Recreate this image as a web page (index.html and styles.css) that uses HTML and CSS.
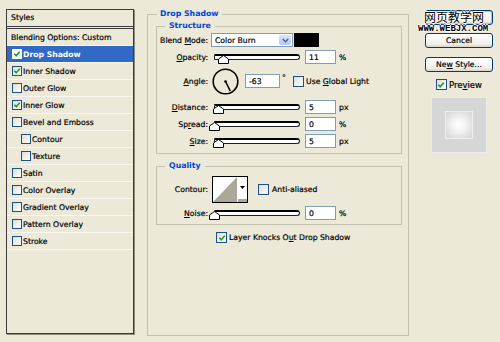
FILE: index.html
```html
<!DOCTYPE html>
<html lang="en">
<head>
  <meta charset="UTF-8">
  <meta name="viewport" content="width=device-width, initial-scale=1.0">
  <title>Layer Style</title>
  <link rel="stylesheet" href="styles.css">
</head>
<body>
  <div class="dialog">
    <div class="styles-list">
      <div class="list-head">Styles</div>
      <div class="list-row">Blending Options: Custom</div>
      <div class="list-row selected"><span class="cb checked"><svg viewBox="0 0 9 9"><path d="M1.5 4.2 L3.6 6.5 L7.6 2"/></svg></span>Drop Shadow</div>
      <div class="list-row"><span class="cb checked"><svg viewBox="0 0 9 9"><path d="M1.5 4.2 L3.6 6.5 L7.6 2"/></svg></span>Inner Shadow</div>
      <div class="list-row"><span class="cb"></span>Outer Glow</div>
      <div class="list-row"><span class="cb checked"><svg viewBox="0 0 9 9"><path d="M1.5 4.2 L3.6 6.5 L7.6 2"/></svg></span>Inner Glow</div>
      <div class="list-row"><span class="cb"></span>Bevel and Emboss</div>
      <div class="list-row sub"><span class="cb"></span>Contour</div>
      <div class="list-row sub"><span class="cb"></span>Texture</div>
      <div class="list-row"><span class="cb"></span>Satin</div>
      <div class="list-row"><span class="cb"></span>Color Overlay</div>
      <div class="list-row"><span class="cb"></span>Gradient Overlay</div>
      <div class="list-row"><span class="cb"></span>Pattern Overlay</div>
      <div class="list-row"><span class="cb"></span>Stroke</div>
    </div>

    <fieldset class="group outer">
      <legend>Drop Shadow</legend>

      <fieldset class="group">
        <legend>Structure</legend>
        <div class="rows">
          <div class="row">
            <span class="lbl">Blend <u>M</u>ode:</span>
            <div class="select">Color Burn<span class="select-btn"><svg viewBox="0 0 9 6"><path d="M1 1 L4.5 4.5 L8 1"/></svg></span></div>
            <div class="swatch"></div>
          </div>
          <div class="row">
            <span class="lbl"><u>O</u>pacity:</span>
            <div class="slider"><div class="track"></div><svg class="thumb" style="left: 11%" viewBox="0 0 11 9"><polygon points="0.5,8.5 0.5,4 5.5,0.5 10.5,4 10.5,8.5"/></svg></div>
            <input class="num" type="text" value="11">
            <span class="unit">%</span>
          </div>
          <div class="row row-angle">
            <span class="lbl"><u>A</u>ngle:</span>
            <svg class="dial" viewBox="0 0 27 27"><circle cx="13.5" cy="13.5" r="12.3"/><line x1="13.5" y1="13.5" x2="18.3" y2="23"/><circle class="dot" cx="13.5" cy="13.5" r="1.3"/></svg>
            <input class="num num-angle" type="text" value="-63">
            <span class="deg">°</span>
            <span class="cb global"></span>
            <span class="cb-text">Use <u>G</u>lobal Light</span>
          </div>
          <div class="row">
            <span class="lbl"><u>D</u>istance:</span>
            <div class="slider"><div class="track"></div><svg class="thumb" style="left: 5%" viewBox="0 0 11 9"><polygon points="0.5,8.5 0.5,4 5.5,0.5 10.5,4 10.5,8.5"/></svg></div>
            <input class="num" type="text" value="5">
            <span class="unit">px</span>
          </div>
          <div class="row">
            <span class="lbl">Sp<u>r</u>ead:</span>
            <div class="slider"><div class="track"></div><svg class="thumb" style="left: 0%" viewBox="0 0 11 9"><polygon points="0.5,8.5 0.5,4 5.5,0.5 10.5,4 10.5,8.5"/></svg></div>
            <input class="num" type="text" value="0">
            <span class="unit">%</span>
          </div>
          <div class="row">
            <span class="lbl"><u>S</u>ize:</span>
            <div class="slider"><div class="track"></div><svg class="thumb" style="left: 5%" viewBox="0 0 11 9"><polygon points="0.5,8.5 0.5,4 5.5,0.5 10.5,4 10.5,8.5"/></svg></div>
            <input class="num" type="text" value="5">
            <span class="unit">px</span>
          </div>
        </div>
      </fieldset>

      <fieldset class="group quality">
        <legend>Quality</legend>
        <div class="rows">
          <div class="row row-contour">
            <span class="lbl">Contour:</span>
            <svg class="contour" viewBox="0 0 36 27">
              <rect x="0.5" y="0.5" width="35" height="26" fill="#fff" stroke="#000"/>
              <polygon points="1,26 25,1 25,26" fill="#aca899"/>
              <polygon points="28,10 33,10 30.5,13" fill="#000"/>
              <rect x="26" y="23" width="9" height="3" fill="#aca899"/>
            </svg>
            <span class="cb anti"></span>
            <span class="cb-text">Anti-aliased</span>
          </div>
          <div class="row">
            <span class="lbl"><u>N</u>oise:</span>
            <div class="slider"><div class="track"></div><svg class="thumb" style="left: 0%" viewBox="0 0 11 9"><polygon points="0.5,8.5 0.5,4 5.5,0.5 10.5,4 10.5,8.5"/></svg></div>
            <input class="num" type="text" value="0">
            <span class="unit">%</span>
          </div>
        </div>
      </fieldset>

      <div class="knock">
        <span class="cb checked"><svg viewBox="0 0 9 9"><path d="M1.5 4.2 L3.6 6.5 L7.6 2"/></svg></span>
        <span class="cb-text">Layer Knocks O<u>u</u>t Drop Shadow</span>
      </div>
    </fieldset>

    <div class="side">
      <button class="btn default" aria-label="OK"></button>
      <button class="btn cancel">Cancel</button>
      <button class="btn new-style">Ne<u>w</u> Style...</button>
      <div class="preview-check">
        <span class="cb checked"><svg viewBox="0 0 9 9"><path d="M1.5 4.2 L3.6 6.5 L7.6 2"/></svg></span>
        <span class="cb-text">Pre<u>v</u>iew</span>
      </div>
      <div class="preview">
        <div class="preview-swatch"></div>
      </div>

      <div class="watermark">
        <div class="wm-cn">网页教学网</div>
        <div class="wm-url">WWW.WEBJX.COM</div>
      </div>
    </div>
  </div>
</body>
</html>
```

FILE: styles.css
```css
* {
  box-sizing: border-box;
}

body {
  margin: 0;
  background-color: #ece9d8;
  font-family: "DejaVu Sans", Tahoma, sans-serif;
  font-size: 7.7px;
  color: #000;
  -webkit-text-stroke: 0.2px currentColor;
}

.dialog {
  display: flex;
  align-items: flex-start;
  width: 500px;
  height: 342px;
  padding: 8px 0 0 6px;
}

/* styles list on the left */
.styles-list {
  width: 128px;
  height: 325px;
  margin-top: 1px;
  border: 1px solid #3c3c3c;
  box-shadow: 1px 1px 0 #8d8b7d;
}

.list-head {
  height: 19px;
  line-height: 16px;
  padding-left: 4px;
  border-bottom: 3px double #3c3c3c;
}

.list-row {
  display: flex;
  align-items: center;
  height: 17px;
  padding-left: 4px;
  border-bottom: 1px solid #f8f7f1;
}

.list-row .cb {
  width: 10px;
  height: 10px;
  margin: 0 1px 0 1px;
}

.list-row.sub {
  padding-left: 13px;
}

.list-row.selected {
  background-color: #316ac5;
  color: #fff;
  font-weight: bold;
  -webkit-text-stroke: 0;
}

.list-row.selected .cb {
  border-color: #fff;
  background: #fff;
}

/* checkboxes */
.cb {
  display: inline-flex;
  align-items: center;
  justify-content: center;
  flex: none;
  width: 11px;
  height: 11px;
  border: 1px solid #1c5180;
  background: linear-gradient(135deg, #dcdcd7, #fff);
}

.cb svg {
  width: 8px;
  height: 8px;
  fill: none;
  stroke: #21a121;
  stroke-width: 1.9;
}

.cb-text {
  margin-left: 2px;
  white-space: nowrap;
}

/* group boxes */
.group {
  margin: 0;
  padding: 0 0 5px 0;
  min-inline-size: 0;
  border: 1px solid #c3c0ae;
}

.group legend {
  margin-left: 8px;
  padding: 0 4px;
  line-height: 12px;
  font-size: 7.8px;
  font-weight: bold;
  color: #0046d5;
  -webkit-text-stroke: 0;
}

.outer {
  width: 262px;
  height: 328px;
  margin-left: 13px;
  padding: 0 6px 0 8px;
}

.outer > legend {
  margin-left: 1px;
  padding: 0 3px;
}

.rows {
  display: flex;
  flex-direction: column;
  gap: 3px;
  padding-top: 1px;
}

.row {
  display: flex;
  align-items: center;
  height: 14px;
  white-space: nowrap;
}

.row-angle {
  height: 28px;
  margin-bottom: 2px;
}

.lbl {
  width: 51px;
  text-align: right;
  flex: none;
}

.select {
  display: flex;
  align-items: center;
  justify-content: space-between;
  width: 82px;
  height: 14px;
  margin-left: 3px;
  padding: 0 1px 0 3px;
  border: 1px solid #7f9db9;
  background: #fff;
}

.select-btn {
  display: flex;
  align-items: center;
  justify-content: center;
  width: 12px;
  height: 10px;
  border-radius: 2px;
  background: linear-gradient(#d8e4fd, #b5c8f7);
}

.select-btn svg {
  width: 7px;
  height: 5px;
  fill: none;
  stroke: #4d6185;
  stroke-width: 1.8;
}

.swatch {
  width: 25px;
  height: 14px;
  margin-left: 1px;
  background: #000;
}

/* sliders */
.slider {
  position: relative;
  width: 86px;
  height: 14px;
  margin-left: 6px;
}

.track {
  margin-top: 4px;
  height: 6px;
  border: 1px solid #222;
  border-top: 2px solid #000;
  border-radius: 1px 3px 3px 1px;
  background: #fff;
}

.thumb {
  position: absolute;
  top: 5px;
  width: 11px;
  height: 9px;
  margin-left: -5px;
  fill: #fff;
  stroke: #000;
}

.num {
  width: 31px;
  height: 14px;
  margin: 0 0 0 5px;
  padding: 0 3px;
  border: 1px solid #7f9db9;
  background: #fff;
  font: inherit;
  color: #000;
}

.unit {
  margin-left: 3px;
}

.dial {
  width: 27px;
  height: 27px;
  margin-left: 4px;
  fill: none;
  stroke: #000;
  stroke-width: 1.6;
}

.dial .dot {
  fill: #000;
  stroke: none;
}

.num-angle {
  width: 35px;
  margin-left: 6px;
}

.deg {
  align-self: flex-start;
  margin: 6px 0 0 2px;
  width: 4px;
}

.global {
  margin-left: 7px;
}

/* quality */
.quality {
  margin-top: 6px;
  padding-bottom: 4px;
}

.quality .rows {
  padding-top: 4px;
}

.row-contour {
  height: 27px;
}

.contour {
  width: 36px;
  height: 27px;
  margin-left: 4px;
}

.anti {
  margin-left: 10px;
}

.anti + .cb-text {
  margin-left: 3px;
}

.knock {
  display: flex;
  align-items: center;
  margin: 7px 0 0 60px;
}

/* right column */
.side {
  position: relative;
  display: flex;
  flex-direction: column;
  align-items: center;
  width: 68px;
  margin: 2px 0 0 16px;
}

.btn {
  width: 68px;
  height: 15px;
  padding: 0;
  border: 1px solid #003c74;
  border-radius: 3px;
  background: linear-gradient(#ffffff, #f2f1ec 75%, #d9d4c8);
  font: inherit;
  color: #000;
  line-height: 12px;
}

.btn.default {
  box-shadow: inset 0 0 0 1px #a9c2ef;
}

.cancel {
  margin-top: 8px;
}

.new-style {
  margin-top: 9px;
}

.preview-check {
  display: flex;
  align-items: center;
  height: 11px;
  margin-top: 7px;
}

.preview-check .cb-text {
  font-size: 8.5px;
}

.preview {
  display: flex;
  align-items: center;
  justify-content: center;
  width: 56px;
  height: 56px;
  margin-top: 7px;
  border: 1px solid #ececec;
  background: #d6d6d6;
}

.preview-swatch {
  width: 28px;
  height: 28px;
  border: 1px solid #efefef;
  background: radial-gradient(circle, #ffffff 0, #f6f6f6 30%, #dadada 85%);
}

/* site watermark over the OK button */
.watermark {
  position: absolute;
  top: 0;
  left: -7px;
  -webkit-text-stroke: 0;
  text-shadow: 1px 0 0 #fff, -1px 0 0 #fff, 0 1px 0 #fff, 0 -1px 0 #fff;
}

.wm-cn {
  margin-left: 6px;
  font-family: "Noto Sans CJK SC", sans-serif;
  font-size: 12px;
  line-height: 13px;
  color: #000;
}

.wm-url {
  margin-top: 2px;
  font-family: "Liberation Mono", monospace;
  font-weight: bold;
  font-size: 9px;
  line-height: 8px;
  color: #000;
}
```
